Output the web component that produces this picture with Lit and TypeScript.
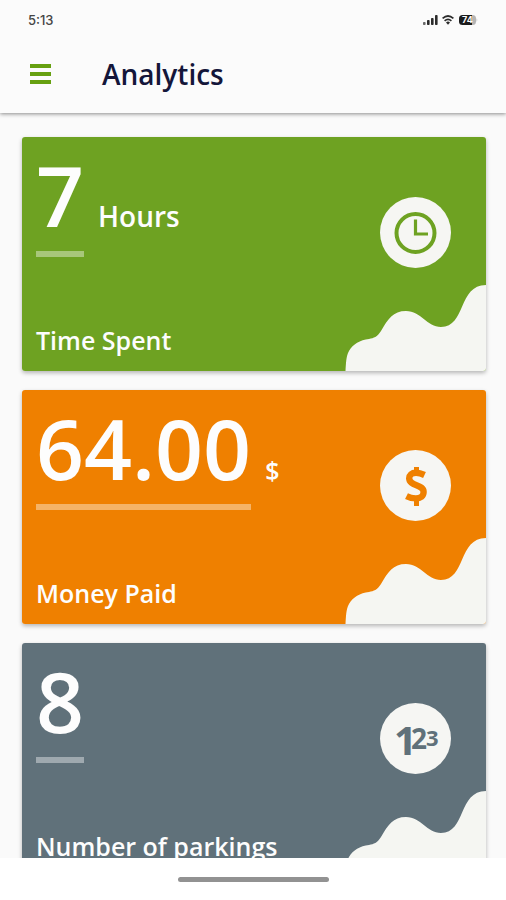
import { LitElement, html, svg, css } from "lit";
import { customElement, property } from "lit/decorators.js";

type Kind = "time" | "money" | "count";

const glyphs = {
  time: svg`
    <g fill="none" stroke="currentColor">
      <circle cx="35.5" cy="36" r="19" stroke-width="4" />
      <path d="M35.5 22.500V37H48" stroke-width="3.2" />
    </g>`,
  money: svg`
    <g fill="none" stroke="currentColor" stroke-width="6.4">
      <path d="M44.500 25C41 23.300 38.500 22.800 36 22.800C31.500 22.800 29.200 25.200 29.200 28.300C29.200 36.500 43.600 34 43.600 42C43.600 46 40.500 48.400 35.800 48.400C32.500 48.400 29.500 47.700 26.500 46.200" />
      <path d="M36.500 17V22M36.500 49V56" stroke-width="5" />
    </g>`,
  count: svg`
    <text class="one" x="14" y="52">1</text>
    <text class="two" x="31" y="46">2</text>
    <text class="three" x="46" y="43">3</text>`,
};

@customElement("stat-card")
export class StatCard extends LitElement {
  @property() kind: Kind = "time";
  @property() value = "";
  @property() unit = "";
  @property() label = "";

  static styles = css`
    :host {
      display: block;
    }
    .card {
      position: relative;
      display: flex;
      justify-content: space-between;
      align-items: flex-start;
      box-sizing: border-box;
      min-height: 234px;
      padding: 16px 35px 13px 14px;
      border-radius: 3px;
      overflow: hidden;
      color: #fdfdfd;
      background: var(--tone);
    }
    .shadow {
      border-radius: 3px;
      box-shadow: 0 2px 4px rgba(0, 0, 0, 0.28);
    }
    .time {
      --tone: #6ea222;
    }
    .money {
      --tone: #ef8000;
    }
    .count {
      --tone: #60717a;
    }
    .text {
      display: flex;
      flex-direction: column;
      justify-content: space-between;
      align-self: stretch;
    }
    .figure {
      display: flex;
      align-items: baseline;
      gap: 14px;
      margin: 0;
    }
    .value {
      padding-bottom: 14px;
      border-bottom: 6px solid rgba(255, 255, 255, 0.4);
      font-size: 84px;
      line-height: 84px;
      font-weight: 600;
    }
    .unit {
      font-size: 28px;
      line-height: 36px;
      font-weight: 600;
    }
    .money .unit {
      font-size: 25px;
    }
    .label {
      margin: 0;
      font-size: 25px;
      line-height: 36px;
      font-weight: 600;
      white-space: nowrap;
    }
    .badge {
      flex: none;
      width: 71px;
      height: 71px;
      margin-top: 44px;
      color: var(--tone);
    }
    .badge text {
      font-family: "Open Sans", sans-serif;
      font-weight: 700;
      fill: currentColor;
    }
    .badge .one {
      font-size: 40px;
    }
    .badge .two {
      font-size: 28px;
    }
    .badge .three {
      font-size: 22px;
    }
    .wave {
      position: absolute;
      right: 0;
      bottom: 0;
      width: 141px;
      height: 86px;
    }
  `;

  render() {
    return html`
      <div class="shadow">
        <article class="card ${this.kind}">
          <svg class="wave" viewBox="0 0 141 86" aria-hidden="true">
            <path
              fill="#f5f6f2"
              d="M0.5 86C1 79 1 71 4 66C8 59 15 55 24 54C29 53 32 52 36 46C43 34 48 26 61 26C76 26 82 42 96 42C121 42 113 0 141 0V86Z"
            />
          </svg>
          <div class="text">
            <p class="figure">
              <span class="value">${this.value}</span>
              ${this.unit ? html`<span class="unit">${this.unit}</span>` : null}
            </p>
            <h2 class="label">${this.label}</h2>
          </div>
          <svg class="badge" viewBox="0 0 71 71" aria-hidden="true">
            <circle cx="35.5" cy="35.5" r="35.5" fill="#f6f6f3" />
            ${glyphs[this.kind]}
          </svg>
        </article>
      </div>
    `;
  }
}

@customElement("app-root")
export class AppRoot extends LitElement {
  static styles = css`
    :host {
      display: flex;
      flex-direction: column;
      height: 100vh;
      overflow: hidden;
      background: #fafafa;
      font-family: "Open Sans", "Noto Sans", sans-serif;
    }
    .top {
      flex: none;
      position: relative;
      background: #fbfbfb;
      box-shadow: 0 1px 4px rgba(0, 0, 0, 0.45);
    }
    .status {
      display: flex;
      align-items: center;
      justify-content: space-between;
      height: 40px;
      padding: 0 28px;
      color: #444;
      font-family: Inter, sans-serif;
      font-size: 13px;
      line-height: 16px;
      font-weight: 500;
    }
    .signals {
      display: block;
      width: 56px;
      height: 12px;
    }
    .signals text {
      font-family: Inter, sans-serif;
      font-size: 9px;
      font-weight: 700;
      fill: #fff;
    }
    .bar {
      display: flex;
      align-items: center;
      gap: 51px;
      height: 73px;
      padding: 0 30px 6px;
      box-sizing: border-box;
    }
    .menu {
      display: flex;
      flex-direction: column;
      gap: 4px;
      width: 21px;
      padding: 0;
      border: 0;
      background: none;
      cursor: pointer;
    }
    .menu span {
      height: 4px;
      background: #66a010;
    }
    h1 {
      margin: 0;
      color: #14163a;
      font-size: 28px;
      line-height: 40px;
      font-weight: 600;
    }
    main {
      flex: 1;
      min-height: 0;
      overflow: hidden;
      display: flex;
      flex-direction: column;
      gap: 19px;
      padding: 24px 20px 0 22px;
    }
    stat-card {
      flex: none;
    }
    footer {
      flex: none;
      display: flex;
      align-items: center;
      justify-content: center;
      height: 42px;
      background: #fff;
    }
    .handle {
      width: 151px;
      height: 5px;
      border-radius: 3px;
      background: #929292;
    }
  `;

  render() {
    return html`
      <header class="top">
        <div class="status">
          <span>5:13</span>
          <svg class="signals" viewBox="0 0 56 12" aria-label="Signal, Wi-Fi, battery 74%">
            <g fill="#2c2c2c">
              <rect x="1" y="8" width="2.6" height="3" rx="0.8" opacity="0.7" />
              <rect x="5" y="6" width="2.6" height="5" rx="0.8" />
              <rect x="9" y="4" width="2.6" height="7" rx="0.8" />
              <rect x="13" y="1" width="2.6" height="10" rx="0.8" />
            </g>
            <g fill="none" stroke="#2c2c2c" stroke-width="1.7">
              <path d="M20.6 4.4Q26 -0.4 31.4 4.4" />
              <path d="M22.6 6.8Q26 3.8 29.4 6.8" />
            </g>
            <path d="M24 8.4Q26 6.8 28 8.4L26 10.8Z" fill="#2c2c2c" />
            <path
              d="M40 1H50.5Q54 1 54 4.5V7.5Q54 11 50.5 11H40Z"
              fill="#b5b5b5"
            />
            <path d="M54.6 4Q56 6 54.6 8Z" fill="#b5b5b5" />
            <path d="M40.500 1H50V11H40.500Q37 11 37 7.500V4.500Q37 1 40.500 1Z" fill="#1c1c1c" />
            <text x="40" y="9.300">74</text>
          </svg>
        </div>
        <div class="bar">
          <button class="menu" type="button" aria-label="Menu">
            <span></span><span></span><span></span>
          </button>
          <h1>Analytics</h1>
        </div>
      </header>
      <main>
        <stat-card kind="time" value="7" unit="Hours" label="Time Spent"></stat-card>
        <stat-card kind="money" value="64.00" unit="$" label="Money Paid"></stat-card>
        <stat-card kind="count" value="8" label="Number of parkings"></stat-card>
      </main>
      <footer><div class="handle"></div></footer>
    `;
  }
}
